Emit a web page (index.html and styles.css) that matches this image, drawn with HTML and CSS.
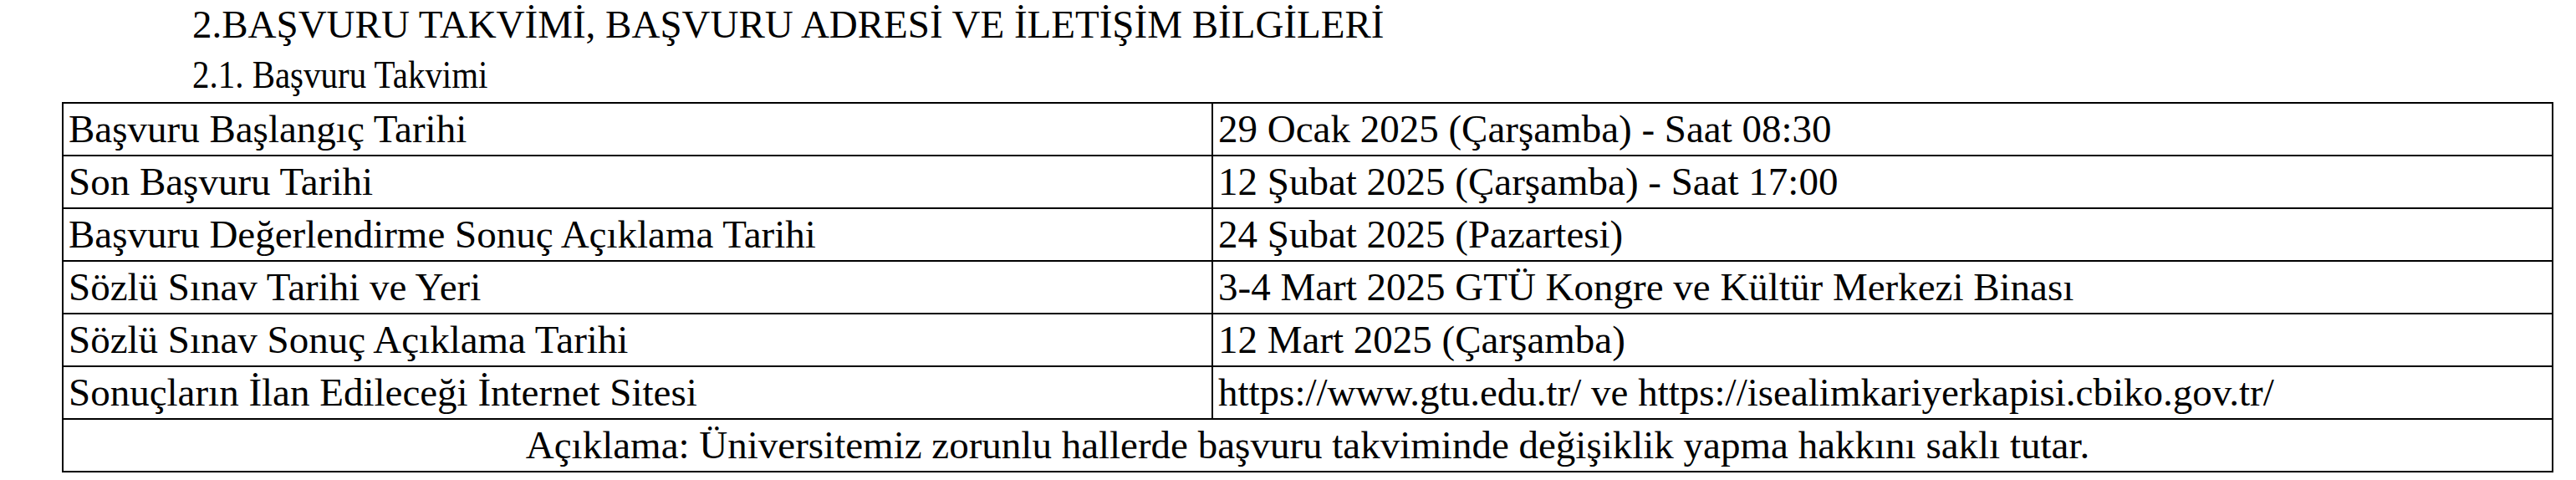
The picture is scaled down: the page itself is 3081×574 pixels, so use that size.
FILE: index.html
```html
<!DOCTYPE html>
<html lang="tr">
<head>
<meta charset="utf-8">
<title>Başvuru Takvimi</title>
<link rel="stylesheet" href="styles.css">
</head>
<body>
<div class="page">
  <div class="heading-main">2.BAŞVURU TAKVİMİ, BAŞVURU ADRESİ VE İLETİŞİM BİLGİLERİ</div>
  <div class="heading-sub"><span class="heading-sub-text">2.1. Başvuru Takvimi</span></div>
  <table class="schedule">
    <colgroup>
      <col class="col-label">
      <col class="col-value">
    </colgroup>
    <tbody>
      <tr><td>Başvuru Başlangıç Tarihi</td><td>29 Ocak 2025 (Çarşamba) - Saat 08:30</td></tr>
      <tr><td>Son Başvuru Tarihi</td><td>12 Şubat 2025 (Çarşamba) - Saat 17:00</td></tr>
      <tr><td>Başvuru Değerlendirme Sonuç Açıklama Tarihi</td><td>24 Şubat 2025 (Pazartesi)</td></tr>
      <tr><td>Sözlü Sınav Tarihi ve Yeri</td><td>3-4 Mart 2025 GTÜ Kongre ve Kültür Merkezi Binası</td></tr>
      <tr><td>Sözlü Sınav Sonuç Açıklama Tarihi</td><td>12 Mart 2025 (Çarşamba)</td></tr>
      <tr><td>Sonuçların İlan Edileceği İnternet Sitesi</td><td>https://www.gtu.edu.tr/ ve https://isealimkariyerkapisi.cbiko.gov.tr/</td></tr>
      <tr><td class="note" colspan="2">Açıklama: Üniversitemiz zorunlu hallerde başvuru takviminde değişiklik yapma hakkını saklı tutar.</td></tr>
    </tbody>
  </table>
</div>
</body>
</html>
```
FILE: styles.css
```css
html, body {
  margin: 0;
  padding: 0;
  background: #ffffff;
}

.page {
  font-family: "Liberation Serif", "Times New Roman", serif;
  color: #000000;
  display: flex;
  flex-direction: column;
}

.heading-main {
  font-size: 47px;
  line-height: 58px;
  height: 58px;
  padding-left: 230px;
  white-space: nowrap;
}

.heading-sub {
  font-size: 46px;
  line-height: 64px;
  height: 64px;
  padding-left: 230px;
  white-space: nowrap;
}

.heading-sub-text {
  display: inline-block;
  transform: scaleX(0.89);
  transform-origin: left center;
}

.schedule {
  margin-left: 74px;
  width: 2978px;
  border-collapse: collapse;
  table-layout: fixed;
}

.col-label {
  width: 1375px;
}

.col-value {
  width: 1603px;
}

.schedule td {
  border: 2px solid #000000;
  height: 61px;
  padding: 0 6px;
  font-size: 47px;
  line-height: 61px;
  white-space: nowrap;
  vertical-align: middle;
}

.schedule td.note {
  text-align: center;
}
```
